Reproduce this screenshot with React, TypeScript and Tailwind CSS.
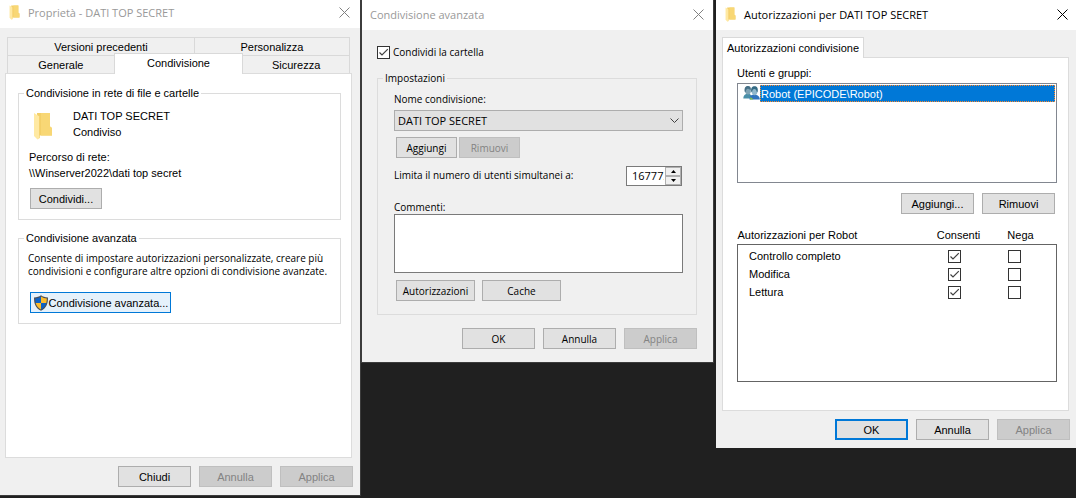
import { useId } from "react";
import type { ReactNode } from "react";

function CloseIcon() {
  return (
    <svg viewBox="0 0 11 11" className="size-[11px]" stroke="currentColor" strokeWidth="1" fill="none" aria-hidden="true">
      <path d="M0.5 0.5 10.5 10.5M10.5 0.5 0.5 10.5" />
    </svg>
  );
}

function FolderIcon({ className }: { className: string }) {
  return (
    <svg viewBox="0 0 20 28" preserveAspectRatio="none" className={className} aria-hidden="true">
      <path d="M4 1H17V14.500L19 16V23.500H5Z" fill="#f3cf68" />
      <path d="M8 1H17V14.500L19 16V23.500H8Z" fill="#f8d775" />
      <path d="M1 1 6.500 4.500V26.500L4.500 27.500 1 24Z" fill="#ffe9a2" />
      <path d="M6.500 4.500V26" stroke="#f2cb62" strokeWidth="0.600" />
    </svg>
  );
}

function ShieldIcon() {
  return (
    <svg viewBox="0 0 16 16" className="size-4 shrink-0" aria-hidden="true">
      <path d="M8 .3C9.800 1.800 12 2.300 15 2.500 15 9 13.500 13 8 15.800 2.500 13 1 9 1 2.500 4 2.300 6.200 1.800 8 .3Z" fill="#4b4f55" />
      <path d="M8 1.600C6.200 2.900 4.300 3.400 2.200 3.600 2.200 5.200 2.300 6.600 2.700 8H8Z" fill="#0f62c4" />
      <path d="M8 1.600C9.800 2.900 11.700 3.400 13.800 3.600 13.800 5.200 13.700 6.600 13.300 8H8Z" fill="#fdbc2c" />
      <path d="M2.700 8C3.500 11 5 13 8 14.600V8Z" fill="#fdbc2c" />
      <path d="M13.300 8C12.500 11 11 13 8 14.600V8Z" fill="#0f62c4" />
    </svg>
  );
}

function UsersIcon() {
  return (
    <svg viewBox="0 0 17 16" className="h-4 w-[17px] shrink-0" aria-hidden="true">
      <path d="M.3 13.500C.3 10.500 2 9 5 8.600 7.500 9 9 10.500 9 13.500Z" fill="#4a8fa8" />
      <ellipse cx="5" cy="5.500" rx="2.900" ry="4" fill="#7fa3b4" />
      <path d="M1.600 6.500C1.200 2.500 2.600 1 5 1 7.200 1 8 2.500 7.800 5 6.500 4.500 5.500 3.800 4.500 3.800 3.300 4 2.800 5.500 2.600 7.500Z" fill="#456f86" />
      <path d="M6.500 14.500C6.500 11 8 9.800 11 9.400 14.500 9.800 16.800 11 16.800 14.500Z" fill="#2f74bd" />
      <ellipse cx="11.600" cy="6" rx="2.900" ry="4.200" fill="#8fb8cc" />
      <path d="M8.200 6.500C7.800 2.700 9.200 1.300 11.500 1.300 14 1.300 15.200 2.800 14.700 6.500L13.900 7.500C13.800 5.500 12.800 4.200 11.300 4 10 4 9.300 5 9 7.500Z" fill="#346b85" />
      <path d="M7.600 12 10.500 14.500H7Z" fill="#8fc641" />
    </svg>
  );
}

function TitleBar({ title, icon, active, className }: { title: string; icon?: boolean; active?: boolean; className: string }) {
  return (
    <header className={`flex items-center bg-white pl-2 font-['Open_Sans',sans-serif] text-[11px] ${active ? "text-black" : "text-[#999999]"} ${className}`}>
      {icon && <FolderIcon className="mr-2 ml-px h-[15px] w-[11px]" />}
      <h1 className="grow whitespace-nowrap">{title}</h1>
      <button type="button" aria-label="Chiudi finestra" className={active ? "text-black" : "text-[#808080]"}>
        <CloseIcon />
      </button>
    </header>
  );
}

function Button({ children, disabled, className = "w-[73px] border border-[#adadad] bg-[#e1e1e1]" }: { children: ReactNode; disabled?: boolean; className?: string }) {
  return (
    <button
      type="button"
      disabled={disabled}
      className={`flex h-[21px] shrink-0 items-center justify-center whitespace-nowrap disabled:border-[#bfbfbf] disabled:bg-[#cccccc] disabled:text-[#838383] ${className}`}
    >
      {children}
    </button>
  );
}

function CheckBox({ id, label, checked }: { id?: string; label?: string; checked?: boolean }) {
  return (
    <span className="relative inline-flex size-[13px] shrink-0 align-middle">
      <input id={id} aria-label={label} type="checkbox" defaultChecked={checked} className="peer size-[13px] appearance-none border border-[#333333] bg-white" />
      <svg viewBox="0 0 13 13" className="pointer-events-none absolute inset-0 hidden size-[13px] peer-checked:block" fill="none" stroke="#404040" strokeWidth="1.200" aria-hidden="true">
        <path d="M2.500 6.500 5 9 10.800 3.200" />
      </svg>
    </span>
  );
}

function Group({ title, className, children }: { title: string; className: string; children: ReactNode }) {
  return (
    <fieldset className={`border border-[#dcdcdc] ${className}`}>
      <legend className="px-0.5 leading-[14px]">{title}</legend>
      {children}
    </fieldset>
  );
}

function PropertiesWindow() {
  return (
    <section className="flex h-[496px] flex-col border-r border-b border-[#3c3c3c] bg-[#f0f0f0] font-['Liberation_Sans',Arial,sans-serif] text-[11px] leading-[14px] text-black">
      <TitleBar title="Proprietà - DATI TOP SECRET" icon className="h-7 pr-[10px] pb-[3px]" />
      <div className="flex grow flex-col pt-[9px] pr-2 pl-[5px]">
        <div role="tablist" className="mx-0.5 flex flex-col">
          <div className="flex h-[18px] border border-b-0 border-[#d9d9d9]">
            <button type="button" role="tab" className="flex-[187] border-r border-[#d9d9d9]">Versioni precedenti</button>
            <button type="button" role="tab" className="flex-[155]">Personalizza</button>
          </div>
          <div className="flex h-[18px] items-end">
            <button type="button" role="tab" className="h-[18px] flex-[107] border border-r-0 border-b-0 border-[#d9d9d9]">Generale</button>
            <button type="button" role="tab" aria-selected="true" className="z-10 -mb-px h-[21px] flex-[129] border border-b-0 border-[#d9d9d9] bg-white pb-0.5">Condivisione</button>
            <button type="button" role="tab" className="h-[18px] flex-[107] border border-b-0 border-l-0 border-[#d9d9d9]">Sicurezza</button>
          </div>
        </div>
        <div role="tabpanel" className="flex h-[385px] flex-col gap-[11px] border border-[#dcdcdc] bg-white pt-3 pr-[10px] pl-3">
          <Group title="Condivisione in rete di file e cartelle" className="h-[134px] px-[5px]">
            <div className="flex items-start pt-2 pl-[9px]">
              <FolderIcon className="mt-1 h-7 w-5" />
              <div className="ml-5 leading-4">
                <p>DATI TOP SECRET</p>
                <p>Condiviso</p>
              </div>
            </div>
            <div className="px-[5px] pt-[9px] leading-4">
              <p>Percorso di rete:</p>
              <p>\\Winserver2022\dati top secret</p>
            </div>
            <div className="px-[6px] pt-[7px]">
              <Button className="w-[72px] border border-[#adadad] bg-[#e1e1e1]">Condividi...</Button>
            </div>
          </Group>
          <Group title="Condivisione avanzata" className="h-[93px] px-[5px]">
            <p className="pt-[7px] pl-1 font-['Open_Sans',sans-serif] text-[10px] leading-[13px] whitespace-nowrap">
              Consente di impostare autorizzazioni personalizzate, creare più
              <br />
              condivisioni e configurare altre opzioni di condivisione avanzate.
            </p>
            <div className="px-[6px] pt-[14px]">
              <Button className="w-[141px] border border-[#0078d7] bg-[#e5f1fb]">
                <ShieldIcon />
                Condivisione avanzata...
              </Button>
            </div>
          </Group>
        </div>
        <footer className="-mr-px flex justify-end gap-2 pt-2">
          <Button>Chiudi</Button>
          <Button disabled>Annulla</Button>
          <Button disabled>Applica</Button>
        </footer>
      </div>
    </section>
  );
}

function AdvancedSharingWindow() {
  const id = useId();
  return (
    <section className="mr-0.5 flex h-[363px] flex-col border-x border-b border-[#3c3c3c] bg-[#f0f0f0] font-['Open_Sans',sans-serif] text-[10px] leading-[14px] text-black">
      <TitleBar title="Condivisione avanzata" className="h-[30px] pr-[9px] pb-px" />
      <div className="flex flex-col pt-[15px] pr-4 pl-[15px]">
        <div className="flex items-center gap-[3px]">
          <CheckBox id={`${id}-share`} checked />
          <label htmlFor={`${id}-share`}>Condividi la cartella</label>
        </div>
        <fieldset className="mt-3 flex h-[244px] flex-col border border-[#dcdcdc] pr-[13px] pl-4">
          <legend className="-ml-[11px] px-0.5">Impostazioni</legend>
          <label htmlFor={`${id}-name`} className="pt-[7px]">Nome condivisione:</label>
          <div className="relative mt-1">
            <select id={`${id}-name`} className="block h-[21px] w-full appearance-none border border-[#adadad] bg-[#e1e1e1] px-[3px] text-[11px]">
              <option>DATI TOP SECRET</option>
            </select>
            <svg viewBox="0 0 9 5" className="pointer-events-none absolute top-2 right-1 h-[5px] w-[9px]" fill="none" stroke="#404040" aria-hidden="true">
              <path d="M0.500 0.500 4.500 4.500 8.500 0.500" />
            </svg>
          </div>
          <div className="mt-[6px] ml-0.5 flex gap-0.5">
            <Button className="w-[61px] border border-[#adadad] bg-[#e1e1e1]">Aggiungi</Button>
            <Button disabled className="w-[61px] border">Rimuovi</Button>
          </div>
          <div className="mt-2 flex justify-between">
            <label htmlFor={`${id}-limit`} className="pt-0.5">Limita il numero di utenti simultanei a:</label>
            <div className="mr-px flex h-5 w-14 border border-[#7a7a7a] bg-white">
              <input id={`${id}-limit`} type="number" defaultValue="16777216" className="mr-px w-[37px] min-w-0 appearance-none bg-white pl-[5px] text-[11px] [appearance:textfield] [&::-webkit-inner-spin-button]:appearance-none" />
              <div className="flex grow flex-col bg-[#f0f0f0]">
                <button type="button" aria-label="Aumenta" className="flex flex-1 items-center justify-center border border-[#b0b0b0]">
                  <svg viewBox="0 0 5 3" className="h-[3px] w-[5px]" aria-hidden="true"><path d="M0 3 2.500 0 5 3Z" /></svg>
                </button>
                <button type="button" aria-label="Diminuisci" className="flex flex-1 items-center justify-center border border-[#b0b0b0]">
                  <svg viewBox="0 0 5 3" className="h-[3px] w-[5px]" aria-hidden="true"><path d="M0 0 2.500 3 5 0Z" /></svg>
                </button>
              </div>
            </div>
          </div>
          <label htmlFor={`${id}-notes`} className="mt-[14px]">Commenti:</label>
          <textarea id={`${id}-notes`} className="block h-[59px] resize-none border border-[#7a7a7a] bg-white" />
          <div className="mt-[7px] ml-0.5 flex gap-[7px]">
            <Button className="w-[79px] border border-[#adadad] bg-[#e1e1e1]">Autorizzazioni</Button>
            <Button className="w-[79px] border border-[#adadad] bg-[#e1e1e1]">Cache</Button>
          </div>
        </fieldset>
        <footer className="mt-[13px] flex justify-end gap-2">
          <Button>OK</Button>
          <Button>Annulla</Button>
          <Button disabled>Applica</Button>
        </footer>
      </div>
    </section>
  );
}

const permissions = ["Controllo completo", "Modifica", "Lettura"];

function PermissionsWindow() {
  return (
    <section className="flex h-[448px] flex-col bg-[#f0f0f0] font-['Liberation_Sans',Arial,sans-serif] text-[11px] leading-[14px] text-black">
      <TitleBar title="Autorizzazioni per DATI TOP SECRET" icon active className="h-[30px] pr-2 pb-px" />
      <div className="flex flex-col px-1.5 pt-[7px]">
        <div role="tablist" className="flex">
          <button type="button" role="tab" aria-selected="true" className="z-10 -mb-px h-[21px] w-[142px] border border-b-0 border-[#d9d9d9] bg-white whitespace-nowrap">
            Autorizzazioni condivisione
          </button>
        </div>
        <div role="tabpanel" className="mr-px flex h-[354px] flex-col border border-[#dcdcdc] bg-white pt-2 pr-[11px] pl-[14px]">
          <h2>Utenti e gruppi:</h2>
          <div role="listbox" aria-label="Utenti e gruppi" className="mt-[3px] h-[100px] border border-[#828790] p-px">
            <div role="option" aria-selected="true" className="flex h-[17px] pl-1">
              <UsersIcon />
              <span className="flex grow items-center border border-dotted border-[#ff8728] bg-[#0078d7] text-white">Robot (EPICODE\Robot)</span>
            </div>
          </div>
          <div className="mt-[10px] mr-0.5 flex justify-end gap-2">
            <Button>Aggiungi...</Button>
            <Button>Rimuovi</Button>
          </div>
          <table className="mt-[14px] w-full table-fixed border-collapse">
            <colgroup>
              <col />
              <col className="w-[60px]" />
              <col className="w-[72px]" />
            </colgroup>
            <thead>
              <tr className="h-4 align-top">
                <th className="text-left font-normal">Autorizzazioni per Robot</th>
                <th className="pl-2 text-center font-normal">Consenti</th>
                <th className="text-center font-normal">Nega</th>
              </tr>
            </thead>
            <tbody className="border border-[#646464]">
              <tr className="h-[3px]">
                <td colSpan={3} />
              </tr>
              {permissions.map((name) => (
                <tr key={name} className="h-[18px] leading-none">
                  <td className="pl-[11px]">{name}</td>
                  <td className="text-center">
                    <CheckBox label={`${name}: consenti`} checked />
                  </td>
                  <td className="pr-3 text-center">
                    <CheckBox label={`${name}: nega`} />
                  </td>
                </tr>
              ))}
              <tr className="h-20">
                <td colSpan={3} />
              </tr>
            </tbody>
          </table>
        </div>
        <footer className="flex justify-end gap-2 pt-2">
          <Button className="w-[73px] border-2 border-[#0078d7] bg-[#e1e1e1]">OK</Button>
          <Button>Annulla</Button>
          <Button disabled>Applica</Button>
        </footer>
      </div>
    </section>
  );
}

export default function App() {
  return (
    <main className="grid min-h-screen grid-cols-[361fr_355fr_360fr] items-start bg-[#202020]">
      <PropertiesWindow />
      <AdvancedSharingWindow />
      <PermissionsWindow />
    </main>
  );
}
